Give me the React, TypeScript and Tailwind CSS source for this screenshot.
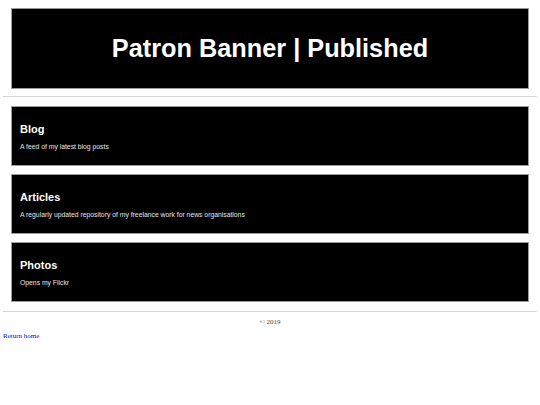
const cards = [
  { title: "Blog", text: "A feed of my latest blog posts" },
  { title: "Articles", text: "A regularly updated repository of my freelance work for news organisations" },
  { title: "Photos", text: "Opens my Flickr" },
];

export default function App() {
  return (
    <div className="min-h-[405px] bg-white px-[3px] pt-[8px] font-['Liberation_Serif',serif]">
      <div className="mx-[8px] flex h-[81px] items-center justify-center border border-[#9a9a9a] bg-black">
        <h1 className="font-['Liberation_Sans',Arial,sans-serif] text-[25.3px] font-bold text-white">
          Patron Banner | Published
        </h1>
      </div>
      <hr className="mt-[7px] border-t border-[#d4d4d4]" />
      <div className="mt-[9px] flex flex-col gap-[8px]">
        {cards.map((c) => (
          <a
            key={c.title}
            href="#"
            className="mx-[8px] flex h-[60px] flex-col justify-center border border-[#9a9a9a] bg-black px-[8px] font-['Liberation_Sans',Arial,sans-serif] text-white"
          >
            <h2 className="text-[11px] font-bold leading-[14px]">{c.title}</h2>
            <p className="mt-[6px] text-[6.8px] leading-[9px] text-[#e6e6e6]">{c.text}</p>
          </a>
        ))}
      </div>
      <hr className="mt-[9px] border-t border-[#d4d4d4]" />
      <p className="mt-[6px] text-center text-[7px] leading-[9px] text-[#444]">© 2019</p>
      <a href="#" className="mt-[5px] block text-[7px] leading-[9px] text-[#0000ee]">
        Return home
      </a>
    </div>
  );
}
